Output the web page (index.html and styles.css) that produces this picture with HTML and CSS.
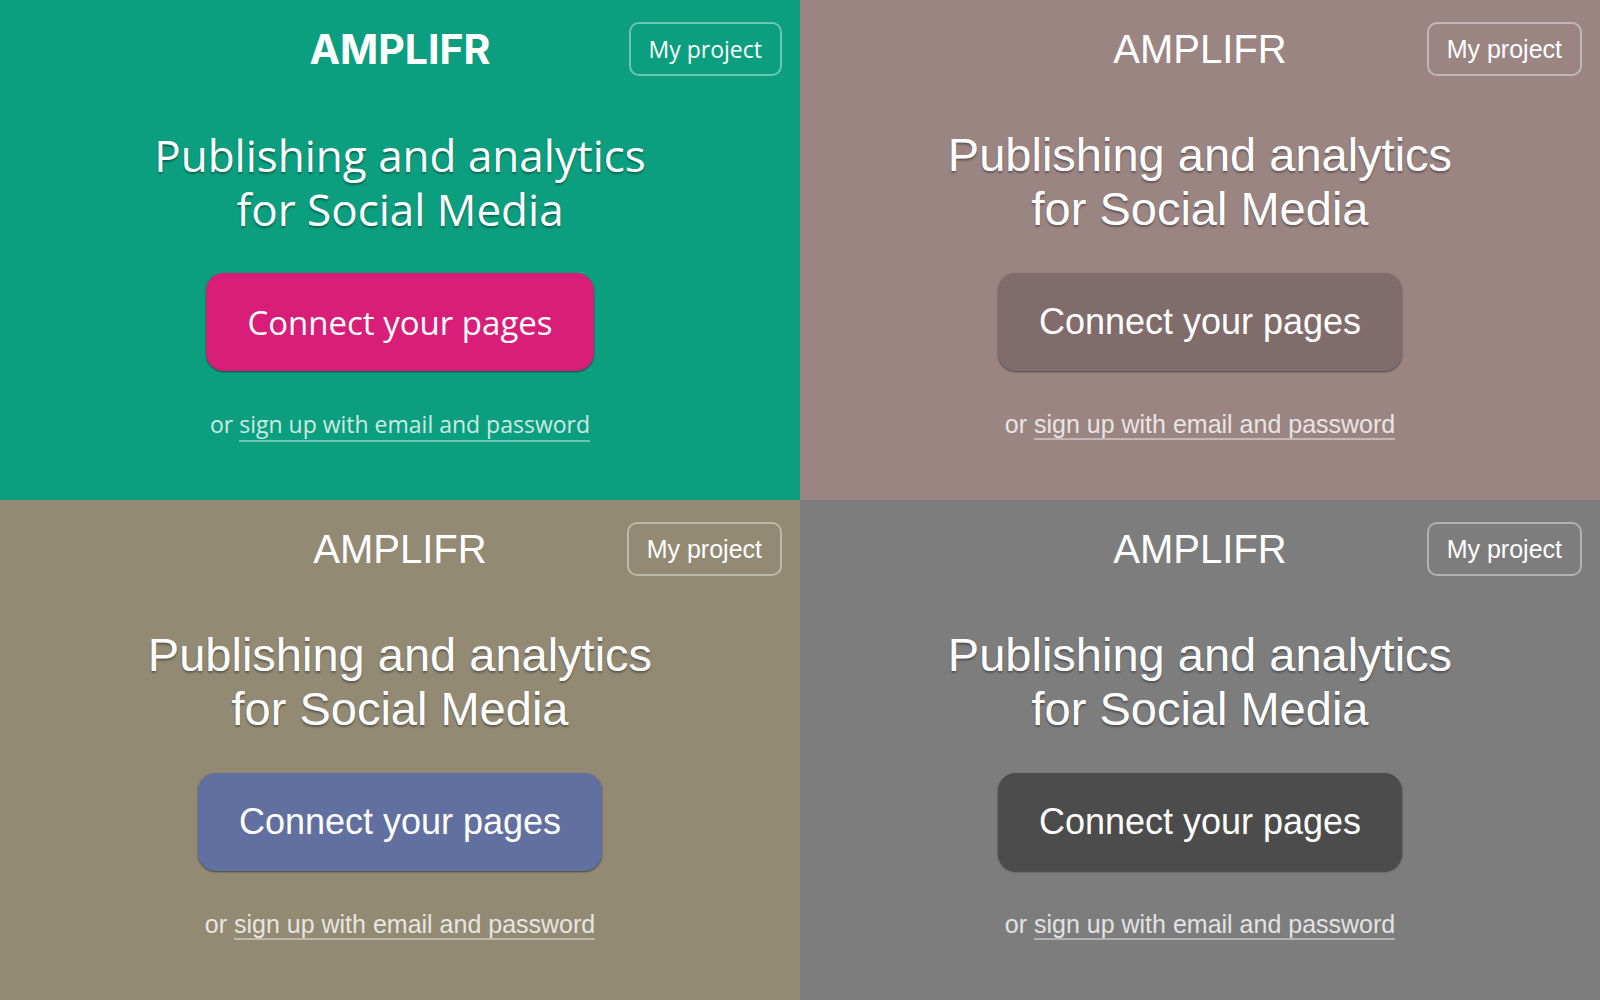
FILE: index.html
```html
<!DOCTYPE html>
<html lang="en">
<head>
<meta charset="utf-8">
<meta name="viewport" content="width=device-width, initial-scale=1">
<title>Amplifr</title>
<link rel="stylesheet" href="styles.css">
</head>
<body>
<main class="themes">
  <section class="panel panel-brand">
    <header class="top">
      <span class="logo">AMPLIFR</span>
      <button class="project" type="button">My project</button>
    </header>
    <h1 class="title">Publishing and analytics<br>for Social Media</h1>
    <button class="connect" type="button">Connect your pages</button>
    <p class="signup">or <a href="#signup">sign up with email and password</a></p>
  </section>
  <section class="panel panel-mauve">
    <header class="top">
      <span class="logo">AMPLIFR</span>
      <button class="project" type="button">My project</button>
    </header>
    <h1 class="title">Publishing and analytics<br>for Social Media</h1>
    <button class="connect" type="button">Connect your pages</button>
    <p class="signup">or <a href="#signup">sign up with email and password</a></p>
  </section>
  <section class="panel panel-khaki">
    <header class="top">
      <span class="logo">AMPLIFR</span>
      <button class="project" type="button">My project</button>
    </header>
    <h1 class="title">Publishing and analytics<br>for Social Media</h1>
    <button class="connect" type="button">Connect your pages</button>
    <p class="signup">or <a href="#signup">sign up with email and password</a></p>
  </section>
  <section class="panel panel-gray">
    <header class="top">
      <span class="logo">AMPLIFR</span>
      <button class="project" type="button">My project</button>
    </header>
    <h1 class="title">Publishing and analytics<br>for Social Media</h1>
    <button class="connect" type="button">Connect your pages</button>
    <p class="signup">or <a href="#signup">sign up with email and password</a></p>
  </section>
</main>
</body>
</html>
```
FILE: styles.css
```css
* { box-sizing: border-box; }

body {
  margin: 0;
  font-family: "Liberation Sans", Arial, sans-serif;
  color: #fff;
}

.themes {
  display: grid;
  grid-template-columns: 1fr 1fr;
  grid-auto-rows: 1fr;
  min-height: 100vh;
}

.panel {
  display: flex;
  flex-direction: column;
  align-items: center;
  padding: 22px 18px;
  background: var(--page);
}

.panel-brand { --page: #0c9f7f; --action: #d91e7a; }
.panel-mauve { --page: #9b8583; --action: #806c6b; }
.panel-khaki { --page: #928a73; --action: #6170a0; }
.panel-gray { --page: #7d7d7d; --action: #4c4c4c; }

.top {
  display: grid;
  grid-template-columns: 1fr auto 1fr;
  align-items: center;
  align-self: stretch;
}

.logo {
  grid-column: 2;
  font-size: 40px;
  line-height: 54px;
}

.project {
  justify-self: end;
  height: 54px;
  padding: 0 18px;
  border: 2px solid rgba(255, 255, 255, 0.4);
  border-radius: 10px;
  background: none;
  color: inherit;
  font: inherit;
  font-size: 25px;
}

.title {
  margin: 52px 0 37px;
  font-size: 47px;
  font-weight: 400;
  line-height: 54px;
  text-align: center;
  text-shadow: 0 2px 2px rgba(0, 0, 0, 0.35);
}

.connect {
  height: 98px;
  padding: 0 41px;
  border: 0;
  border-radius: 18px;
  background: var(--action);
  box-shadow: 0 1px 2px rgba(0, 0, 0, 0.5);
  color: inherit;
  font: inherit;
  font-size: 36px;
}

.signup {
  margin: 38px 0 0;
  color: rgba(255, 255, 255, 0.8);
  font-size: 25px;
  line-height: 30px;
}

.signup a {
  border-bottom: 2px solid rgba(255, 255, 255, 0.4);
  color: inherit;
  text-decoration: none;
}

.panel-brand { font-family: "Open Sans", sans-serif; }

.panel-brand .logo {
  font-family: Inter, sans-serif;
  font-size: 41px;
  font-weight: 700;
}

.panel-brand .title { font-size: 44px; }
.panel-brand .connect { font-size: 33px; }
.panel-brand .project,
.panel-brand .signup { font-size: 23px; }
```
